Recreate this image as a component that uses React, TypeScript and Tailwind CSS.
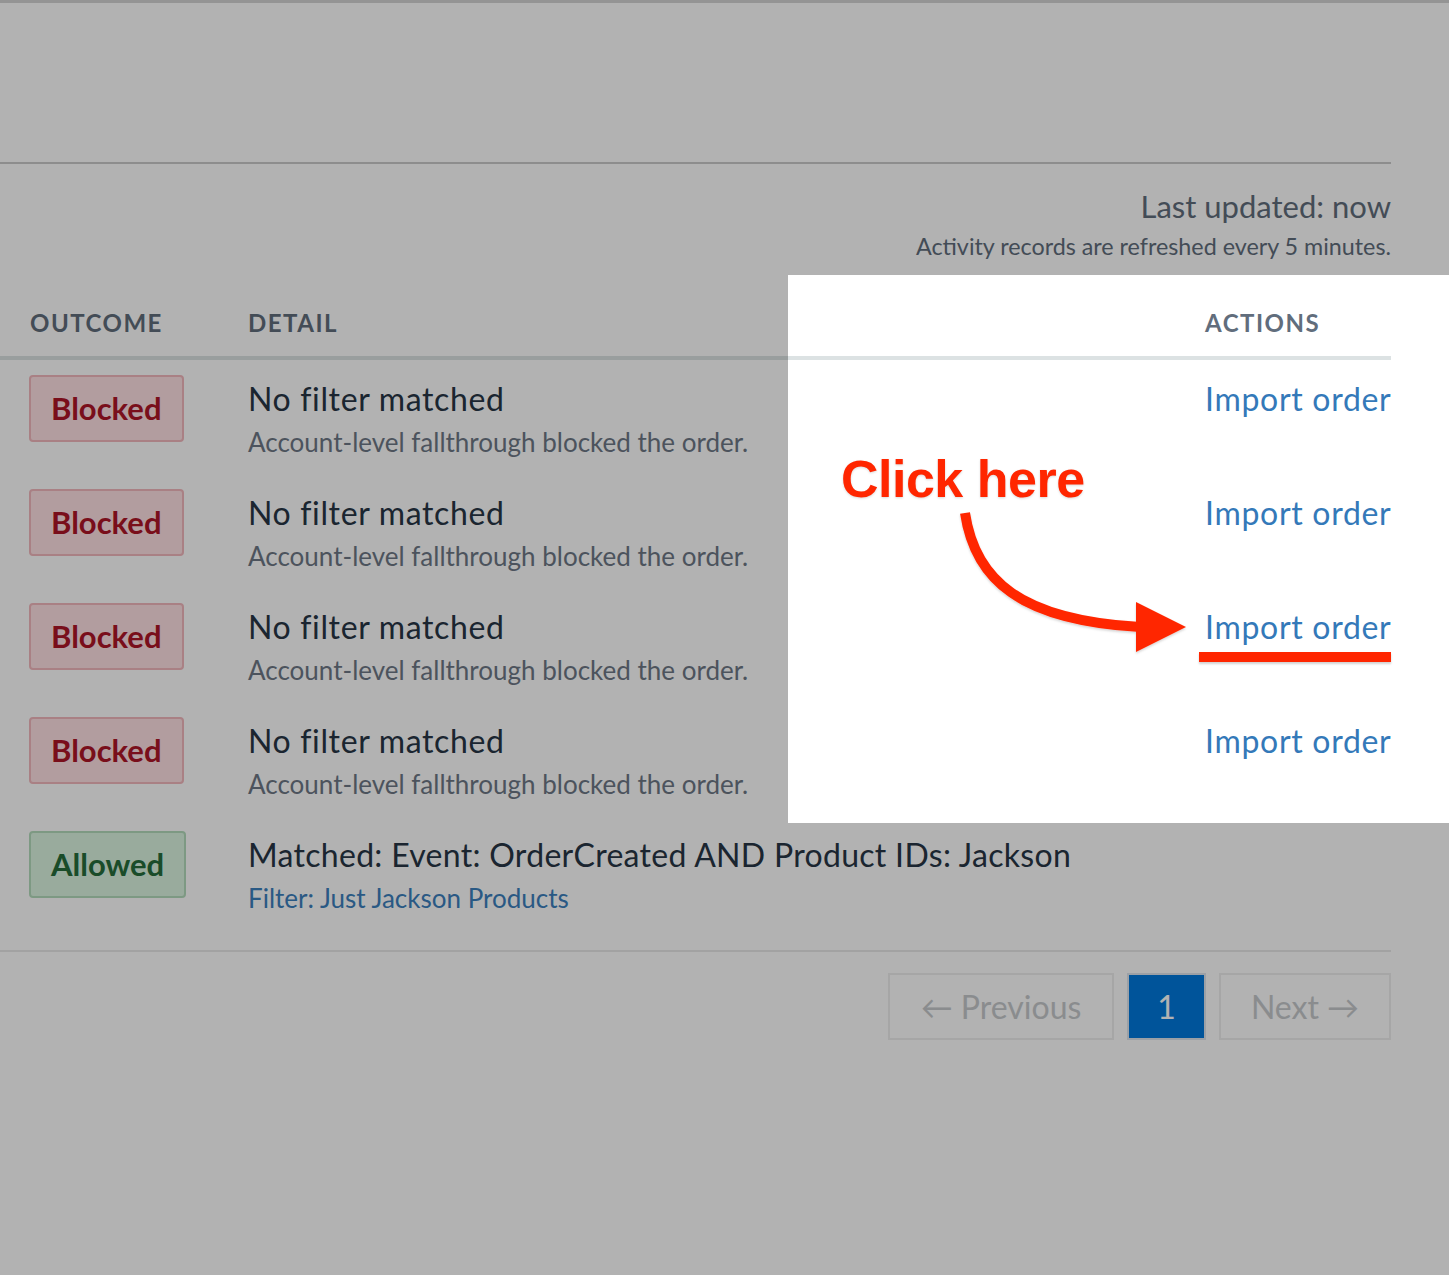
import React from "react";

type Row = {
  outcome: "Blocked" | "Allowed";
  title: string;
  sub: string;
  action?: string;
};

const rows: Row[] = [
  { outcome: "Blocked", title: "No filter matched", sub: "Account-level fallthrough blocked the order.", action: "Import order" },
  { outcome: "Blocked", title: "No filter matched", sub: "Account-level fallthrough blocked the order.", action: "Import order" },
  { outcome: "Blocked", title: "No filter matched", sub: "Account-level fallthrough blocked the order.", action: "Import order" },
  { outcome: "Blocked", title: "No filter matched", sub: "Account-level fallthrough blocked the order.", action: "Import order" },
  { outcome: "Allowed", title: "Matched: Event: OrderCreated AND Product IDs: Jackson", sub: "Filter: Just Jackson Products" },
];

function Badge({ kind }: { kind: Row["outcome"] }) {
  if (kind === "Blocked") {
    return (
      <span className="inline-flex h-[67px] items-center rounded-[4px] border-2 border-[#f2b8bd] bg-[#ffe1e4] px-[20px] text-[31px] font-bold text-[#ae1528]">
        Blocked
      </span>
    );
  }
  return (
    <span className="inline-flex h-[67px] items-center rounded-[4px] border-2 border-[#b4dcbc] bg-[#dcf5e1] px-[20px] text-[31px] font-bold text-[#266e3c]">
      Allowed
    </span>
  );
}

export default function App() {
  return (
    <div className="relative h-[1275px] w-[1449px] overflow-hidden bg-white font-['Lato','Noto_Sans',sans-serif]">
      <div className="h-[3px] bg-[#d4d4d4]" />
      <div className="h-[159px]" />
      <div className="w-[1391px] border-t-2 border-[#cbcbcb]">
        <div className="flex flex-col items-end pt-[22px] text-[#616d7c]">
          <div className="text-[31px] leading-[40px]">Last updated: now</div>
          <div className="mt-[4px] text-[23.3px] leading-[32px]">Activity records are refreshed every 5 minutes.</div>
        </div>

        <div className="mt-[13px] flex h-[85px] border-b-4 border-[#dce2e3] text-[24px] font-bold uppercase leading-[24px] tracking-[1.5px] text-[#616d7c]">
          <div className="w-[248px] pl-[30px] pt-[36px]">Outcome</div>
          <div className="flex-1 pt-[36px]">Detail</div>
          <div className="w-[186px] pt-[36px]">Actions</div>
        </div>

        {rows.map((r, i) => (
          <div key={i} className="flex h-[114px] pt-[15px]">
            <div className="w-[248px] pl-[29px]">
              <Badge kind={r.outcome} />
            </div>
            <div className="flex-1">
              <div className={"mt-[4px] text-[32px] leading-[40px] text-[#283545] " + (r.action ? "tracking-[0.65px]" : "tracking-[0.3px]")}>
                {r.title}
              </div>
              {r.action ? (
                <div className="mt-[5px] text-[26px] leading-[36px] text-[#6e7886]">{r.sub}</div>
              ) : (
                <a className="mt-[5px] block text-[26px] leading-[36px] text-[#3c80bd]">{r.sub}</a>
              )}
            </div>
            <div className="w-[186px]">
              {r.action && (
                <a className="mt-[4px] block whitespace-nowrap text-[32px] leading-[40px] tracking-[0.7px] text-[#3479b9]">{r.action}</a>
              )}
            </div>
          </div>
        ))}

        <div className="mt-[20px] border-t-2 border-[#e8e8e8]" />
        <div className="flex justify-end gap-[13px] pt-[21px]">
          <div className="flex h-[67px] w-[226px] items-center justify-center border-2 border-[#eeeeee] text-[32px] text-[#c6c9cc]">
            ← Previous
          </div>
          <div className="flex h-[67px] w-[79px] items-center justify-center border-2 border-[#dfe6ee] bg-[#0079dd] text-[32px] text-white">
            1
          </div>
          <div className="flex h-[67px] w-[172px] items-center justify-center border-2 border-[#eeeeee] text-[32px] text-[#c6c9cc]">
            Next →
          </div>
        </div>
      </div>

      {/* dimming overlay with highlighted region */}
      <div className="pointer-events-none absolute left-[788px] top-[275px] h-[548px] w-[661px] shadow-[0_0_0_3000px_rgba(0,0,0,0.3)]" />

      {/* annotation */}
      <div className="absolute left-[841px] top-[453px] whitespace-nowrap font-['Liberation_Sans',Arial,sans-serif] text-[52px] font-bold leading-none tracking-[-0.5px] text-[#ff2600] drop-shadow-[0_1px_1px_rgba(0,0,0,0.15)]">
        Click here
      </div>
      <svg className="pointer-events-none absolute left-[940px] top-[500px]" width="260" height="180" viewBox="0 0 260 180">
        <defs>
          <filter id="sh" x="-10%" y="-10%" width="120%" height="130%">
            <feDropShadow dx="0" dy="1.5" stdDeviation="1.2" floodColor="#000" floodOpacity="0.18" />
          </filter>
        </defs>
        <g filter="url(#sh)">
          <path d="M25 13 C 35 80, 80 120, 200 127" fill="none" stroke="#ff2600" strokeWidth="10" />
          <polygon points="196,102 196,152 246,127" fill="#ff2600" />
        </g>
      </svg>
      <div className="absolute left-[1199px] top-[652px] h-[10px] w-[192px] bg-[#ff2600] shadow-[0_1.5px_2px_rgba(0,0,0,0.18)]" />
    </div>
  );
}
